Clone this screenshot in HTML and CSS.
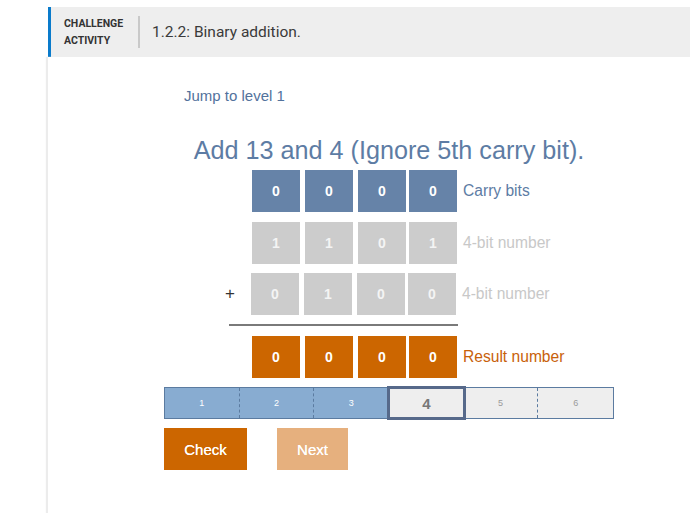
FILE: index.html
```html
<!DOCTYPE html>
<html>
<head>
<meta charset="utf-8">
<link rel="stylesheet" href="styles.css">
</head>
<body>
<div class="page">
  <div class="header">
    <div class="kind">CHALLENGE<br>ACTIVITY</div>
    <div class="divider"></div>
    <div class="title">1.2.2: Binary addition.</div>
  </div>
  <div class="content">
    <div class="activity">
      <div class="jump">Jump to level 1</div>
      <div class="prompt">Add 13 and 4 (Ignore 5th carry bit).</div>
      <div class="row row-carry">
        <div class="lead"></div>
        <div class="box carry">0</div><div class="box carry">0</div><div class="box carry">0</div><div class="box carry">0</div>
        <div class="label label-carry">Carry bits</div>
      </div>
      <div class="row row-a">
        <div class="lead"></div>
        <div class="box given">1</div><div class="box given">1</div><div class="box given">0</div><div class="box given">1</div>
        <div class="label label-given">4-bit number</div>
      </div>
      <div class="row row-b">
        <div class="lead">+</div>
        <div class="box given">0</div><div class="box given">1</div><div class="box given">0</div><div class="box given">0</div>
        <div class="label label-given">4-bit number</div>
      </div>
      <div class="sum-line"></div>
      <div class="row row-result">
        <div class="lead"></div>
        <div class="box result">0</div><div class="box result">0</div><div class="box result">0</div><div class="box result">0</div>
        <div class="label label-result">Result number</div>
      </div>
      <div class="levels">
        <div class="lvl done">1</div>
        <div class="lvl done">2</div>
        <div class="lvl done">3</div>
        <div class="lvl current">4</div>
        <div class="lvl todo">5</div>
        <div class="lvl todo last">6</div>
      </div>
      <div class="buttons">
        <div class="btn check">Check</div>
        <div class="btn next">Next</div>
      </div>
    </div>
  </div>
</div>
</body>
</html>
```

FILE: styles.css
```css
* { box-sizing: border-box; }
html, body { margin: 0; padding: 0; background: #fff; }
body { font-family: "Liberation Sans", Arial, sans-serif; }
.page { padding: 7px 0 0 48px; height: 513px; }
.header {
  height: 50px;
  background: #eeeeee;
  border-left: 3px solid #0a7bcb;
  display: flex;
  align-items: center;
  font-family: Roboto, "Liberation Sans", sans-serif;
  color: #333;
}
.kind {
  font-size: 10.5px;
  font-weight: 700;
  line-height: 17px;
  padding-left: 13px;
  width: 87px;
}
.divider { width: 2px; height: 32px; background: #c9c9c9; }
.title { font-size: 15.5px; padding-left: 12px; color: #3a3a3a; }
.content {
  height: 456px;
  box-shadow: -2px 0 1px #ececec;
}
.activity { margin-left: 116px; width: 450px; padding-top: 31px; }
.jump { padding-left: 20px; font-size: 15px; line-height: 16px; color: #52729c; }
.prompt {
  margin-top: 32px;
  text-align: center;
  font-size: 25.2px;
  line-height: 28px;
  color: #5d7ca4;
}
.row { display: flex; align-items: center; height: 42px; }
.row-carry { margin-top: 6px; }
.row-a { margin-top: 10px; }
.row-b { margin-top: 9px; }
.row-result { margin-top: 10px; }
.lead { width: 88px; text-align: right; padding-right: 16px; font-size: 17px; font-weight: 300; color: #333; }
.row-b .lead { width: 87px; }
.box {
  width: 48px;
  height: 42px;
  margin-right: 5px;
  display: flex;
  align-items: center;
  justify-content: center;
  font-size: 14px;
  font-weight: 700;
  color: #fff;
}
.box:nth-of-type(4) { margin-right: 3px; }
.carry { background: #6683a8; }
.given { background: #cccccc; color: #f4f4f4; }
.result { background: #cc6600; }
.label { font-size: 15.6px; padding-left: 1px; }
.label-carry { color: #5d7ca4; }
.label-given { color: #c8c8c8; }
.label-result { color: #c8610a; }
.sum-line { margin: 9px 0 0 65px; width: 229px; height: 2px; background: #7a7a7a; }
.levels {
  margin-top: 9px;
  display: flex;
  height: 32px;
  border: 1px solid #5b7ba0;
}
.lvl {
  width: 75px;
  display: flex;
  align-items: center;
  justify-content: center;
  font-size: 9px;
  border-right: 1px dashed #5b7ba0;
}
.lvl.last { border-right: none; }
.done { background: #88acd1; color: #fff; }
.todo { background: #eeeeee; color: #9a9a9a; }
.current {
  background: #eeeeee;
  color: #777;
  font-size: 15px;
  font-weight: 700;
  border-right: none;
  outline: 3px solid #56698a;
  outline-offset: -1px;
  position: relative;
  z-index: 1;
}
.buttons { margin-top: 9px; display: flex; gap: 30px; }
.btn {
  height: 42px;
  display: flex;
  align-items: center;
  justify-content: center;
  color: #fff;
  font-size: 15px;
  text-shadow: 0 0 0.4px #fff;
}
.check { width: 83px; background: #cc6600; }
.next { width: 71px; background: #e6b07e; }
```
